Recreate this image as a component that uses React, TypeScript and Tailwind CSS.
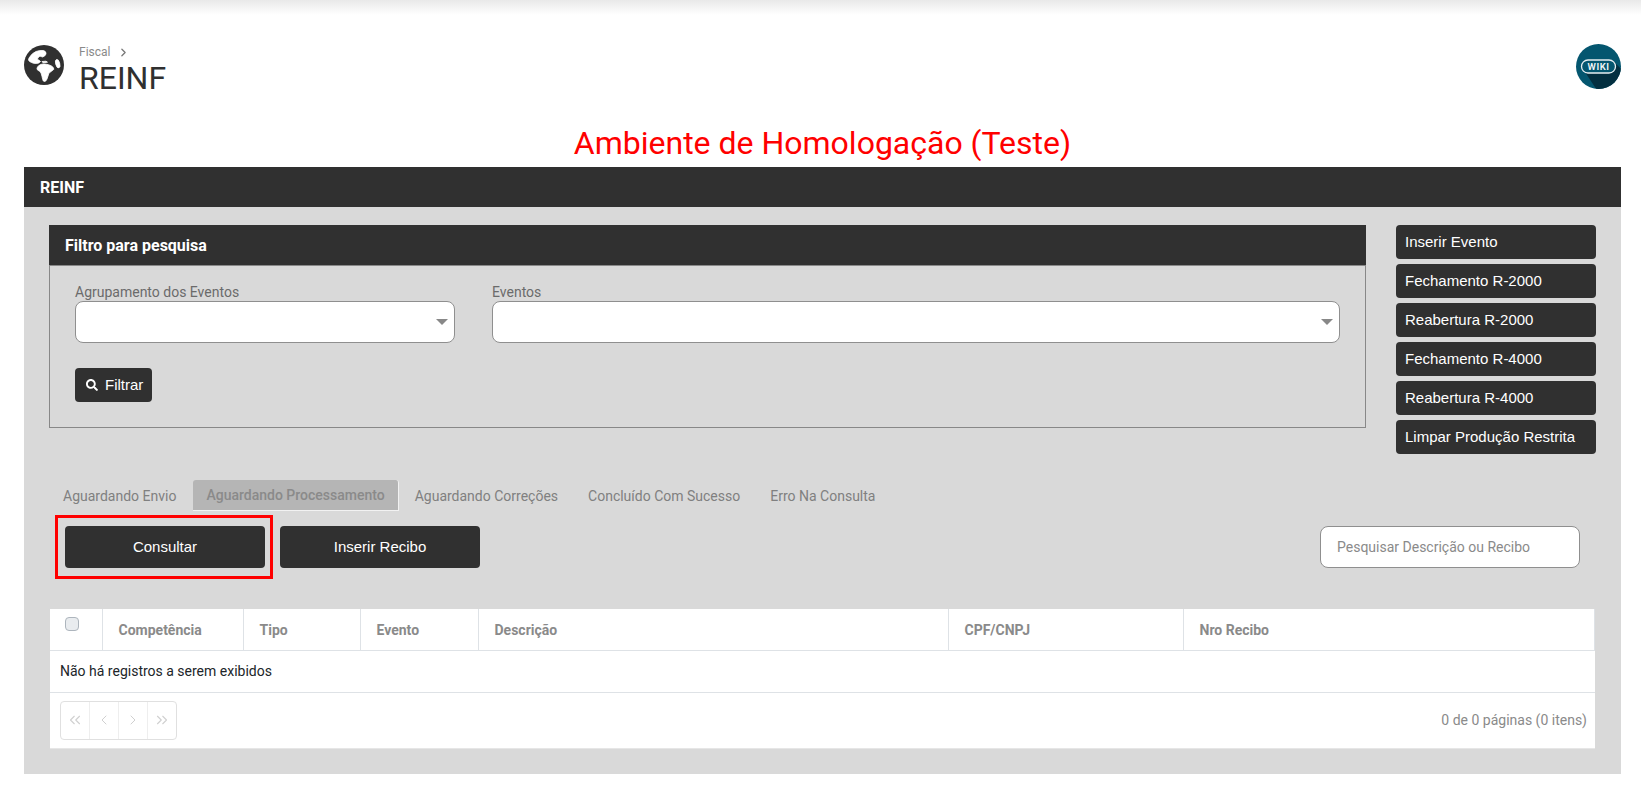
import { ChevronLeft, ChevronRight, ChevronsLeft, ChevronsRight } from "lucide-react";
import { FaSearch } from "react-icons/fa";

const sideButtons = [
  "Inserir Evento",
  "Fechamento R-2000",
  "Reabertura R-2000",
  "Fechamento R-4000",
  "Reabertura R-4000",
  "Limpar Produção Restrita",
];

const tabs = [
  "Aguardando Envio",
  "Aguardando Processamento",
  "Aguardando Correções",
  "Concluído Com Sucesso",
  "Erro Na Consulta",
];

const columns = [
  { label: "Competência", className: "w-[141px]" },
  { label: "Tipo", className: "w-[117px]" },
  { label: "Evento", className: "w-[118px]" },
  { label: "Descrição", className: "w-[470px]" },
  { label: "CPF/CNPJ", className: "w-[235px]" },
  { label: "Nro Recibo", className: "" },
];

const pagerIcons = [
  { Icon: ChevronsLeft, size: 18 },
  { Icon: ChevronLeft, size: 16 },
  { Icon: ChevronRight, size: 16 },
  { Icon: ChevronsRight, size: 18 },
];

function GlobeIcon() {
  return (
    <svg width="40" height="40" viewBox="0 0 40 40" className="mt-px shrink-0" aria-hidden>
      <circle cx="20" cy="20" r="20" fill="#303030" />
      <g fill="#ffffff" stroke="#ffffff" strokeWidth="0.8" strokeLinejoin="round">
        <path d="M5 13 Q8 8 12 6.5 Q16 5 19.5 5.5 Q22.5 6.5 22 9 Q21 11.5 18.5 12 Q16.5 11 15.5 11.5 Q13 13 13.5 14.5 Q15.5 15 16.5 16.5 Q15 18.5 12.5 18.5 Q9 18.5 7.5 17.5 Q5 16.5 4.5 15 Z" />
        <path d="M15.5 20 Q18 18.7 21 19 Q25 19.5 27.5 21 Q30 22.5 29.8 24.3 Q27.5 26.5 25 28 Q24 31 23 34 Q22 36.5 20.5 36.5 Q19 36.5 18.7 34.5 Q18 31 17 28 Q16 26 13.5 25 Q12.5 23.5 13.5 22 Z" />
        <path d="M18 16.5 L22 16.2 L23.5 17.2 L19 17.8 Z" />
        <ellipse cx="33.7" cy="18.7" rx="2" ry="4.3" transform="rotate(-15 33.7 18.7)" />
      </g>
    </svg>
  );
}

function WikiBadge() {
  return (
    <svg width="45" height="45" viewBox="0 0 45 45" aria-label="Wiki">
      <defs>
        <clipPath id="wiki-circle">
          <circle cx="22.5" cy="22.5" r="22.5" />
        </clipPath>
      </defs>
      <circle cx="22.5" cy="22.5" r="22.5" fill="#04566f" />
      <polygon points="9,28 38,18 60,39 30,60" fill="#032f40" clipPath="url(#wiki-circle)" />
      <rect x="5.5" y="16" width="34" height="13" rx="6.5" fill="#04566f" stroke="#e6eef1" strokeWidth="1.3" />
      <text
        x="22.5"
        y="26"
        textAnchor="middle"
        fill="#f2f6f8"
        fontSize="9.5"
        fontWeight="600"
        fontFamily="Roboto, sans-serif"
        letterSpacing="0.5"
      >
        WIKI
      </text>
    </svg>
  );
}

function SelectField({ label, widthClass }: { label: string; widthClass: string }) {
  return (
    <div className={widthClass}>
      <label className="block h-[18px] text-[14px] leading-[18px] text-[#6b6b6b]">{label}</label>
      <div className="flex h-[42px] items-center justify-end rounded-[8px] border border-[#8f8f8f] bg-white pr-[6px]">
        <span className="h-0 w-0 border-x-[6px] border-t-[6px] border-x-transparent border-t-[#888888]" />
      </div>
    </div>
  );
}

export default function App() {
  return (
    <div className="min-h-[785px] bg-white font-['Roboto',sans-serif]">
      <div className="h-[15px] bg-gradient-to-b from-[#e9e9e9] to-white" />

      <header className="ml-[24px] mr-[20px] flex h-[109px] items-start justify-between pt-[29px]">
        <div className="flex gap-[15px]">
          <GlobeIcon />
          <div className="pt-px">
            <div className="flex h-[14px] items-center gap-[7px] text-[12px] leading-[14px] text-[#8a8a8a]">
              <span>Fiscal</span>
              <ChevronRight size={13} strokeWidth={2.4} className="text-[#777777]" />
            </div>
            <h1 className="mt-px text-[32px] leading-[36px] font-normal text-[#303030]">REINF</h1>
          </div>
        </div>
        <WikiBadge />
      </header>

      <h2 className="mr-[20px] mb-[5px] ml-[24px] h-[38px] text-center text-[32px] leading-[38px] text-[#ff0000]">
        Ambiente de Homologação (Teste)
      </h2>

      <section className="ml-[24px] mr-[20px] bg-[#d9d9d9]">
        <div className="flex h-[40px] items-center bg-[#303030] pt-px pl-[16px] text-[16px] font-bold text-white">REINF</div>

        <div className="px-[25px] pt-[18px] pb-[25px]">
          <div className="flex items-start gap-[30px]">
            <div className="w-[1317px]">
              <div className="flex h-[40px] items-center bg-[#303030] pt-px pl-[16px] text-[16px] font-bold text-white">
                Filtro para pesquisa
              </div>
              <div className="border border-[#888888] pt-[17px] pr-[25px] pb-[25px] pl-[25px]">
                <div className="flex gap-[37px]">
                  <SelectField label="Agrupamento dos Eventos" widthClass="w-[380px]" />
                  <SelectField label="Eventos" widthClass="w-[848px]" />
                </div>
                <button className="mt-[25px] flex h-[34px] w-[77px] items-center gap-[7px] rounded-[4px] bg-[#303030] pl-[11px] font-['Liberation_Sans',Arial,sans-serif] text-[15px] text-white">
                  <FaSearch className="text-[12px]" />
                  Filtrar
                </button>
              </div>
            </div>

            <div className="flex w-[200px] flex-col gap-[5px]">
              {sideButtons.map((label) => (
                <button
                  key={label}
                  className="h-[34px] rounded-[4px] bg-[#303030] pl-[9px] text-left font-['Liberation_Sans',Arial,sans-serif] text-[15px] text-white"
                >
                  {label}
                </button>
              ))}
            </div>
          </div>

          <nav className="mt-[26px] ml-px flex h-[31px] gap-[4px]">
            {tabs.map((tab, index) => (
              <span
                key={tab}
                className={
                  index === 1
                    ? "-mr-px flex items-center rounded-t-[3px] border-r border-b border-[#f2f2f2] bg-[#b5b5b5] px-[13px] pt-px text-[14px] font-medium text-[#8a8a8a]"
                    : "flex items-center px-[13px] pt-px text-[14px] text-[#808080]"
                }
              >
                {tab}
              </span>
            ))}
          </nav>

          <div className="mt-[4px] ml-[6px] flex items-start">
            <div className="border-[3px] border-[#ff0000] py-[8px] pr-[5px] pl-[7px]">
              <button className="h-[42px] w-[200px] rounded-[4px] bg-[#303030] font-['Liberation_Sans',Arial,sans-serif] text-[15px] text-white">
                Consultar
              </button>
            </div>
            <button className="mt-[11px] ml-[7px] h-[42px] w-[200px] rounded-[4px] bg-[#303030] font-['Liberation_Sans',Arial,sans-serif] text-[15px] text-white">
              Inserir Recibo
            </button>
            <input
              placeholder="Pesquisar Descrição ou Recibo"
              className="mt-[11px] mr-[16px] ml-auto h-[42px] w-[260px] rounded-[8px] border border-[#8f8f8f] bg-white px-[16px] text-[14px] outline-none placeholder:text-[#8a8a8a]"
            />
          </div>

          <div className="mx-px mt-[30px] bg-white">
            <table className="w-full table-fixed border-collapse text-[14px]">
              <thead>
                <tr className="h-[41px] border-b border-[#dee2e6]">
                  <th className="w-[52px] border-r border-[#dee2e6] pl-[15px] text-left align-middle">
                    <input
                      type="checkbox"
                      className="mb-[11px] block h-[14px] w-[14px] appearance-none rounded-[4px] border border-[#adb5bd] bg-[#e9ecef]"
                    />
                  </th>
                  {columns.map((col) => (
                    <th
                      key={col.label}
                      className={`${col.className} border-r border-[#dee2e6] pt-[2px] pl-[16px] text-left font-bold text-[#8a8a8a]`}
                    >
                      {col.label}
                    </th>
                  ))}
                </tr>
              </thead>
              <tbody>
                <tr className="h-[42px] border-b border-[#dee2e6]">
                  <td colSpan={7} className="pl-[10px] text-[#212529]">
                    Não há registros a serem exibidos
                  </td>
                </tr>
              </tbody>
            </table>

            <div className="flex h-[56px] items-center justify-between border-b border-[#e6e6e6] pr-[8px] pl-[10px]">
              <div className="flex h-[39px] w-[117px] rounded-[4px] border border-[#e0e0e0]">
                {pagerIcons.map(({ Icon, size }, index) => (
                  <span
                    key={index}
                    className="flex flex-1 items-center justify-center border-r border-[#eeeeee] text-[#d0d0d0] last:border-r-0"
                  >
                    <Icon size={size} strokeWidth={1.5} />
                  </span>
                ))}
              </div>
              <span className="text-[14px] text-[#8a8a8a]">0 de 0 páginas (0 itens)</span>
            </div>
          </div>
        </div>
      </section>
    </div>
  );
}
